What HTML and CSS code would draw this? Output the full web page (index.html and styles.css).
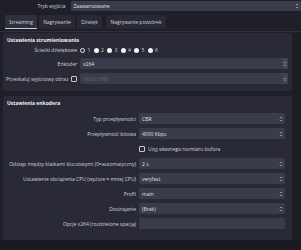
FILE: index.html
```html
<!DOCTYPE html>
<html lang="pl">
<head>
<meta charset="utf-8">
<link rel="stylesheet" href="styles.css">
</head>
<body>
<div class="toprow">
  <div class="toplabel">Tryb wyjścia</div>
  <div class="field topfield"><span>Zaawansowane</span>
    <svg class="ind" viewBox="0 0 4 6" width="4" height="6"><path d="M0.8 2.2 L2 1 L3.2 2.2 M0.8 3.8 L2 5 L3.2 3.8" fill="none" stroke="#b8b9c2" stroke-width="0.7"/></svg>
  </div>
</div>

<div class="tabs">
  <div class="tab active t1">Streaming</div>
  <div class="tab t2">Nagrywanie</div>
  <div class="tab t3">Dźwięk</div>
  <div class="tab t4">Nagrywanie powtórek</div>
</div>
<div class="tabline"></div>

<div class="main">
  <div class="scrollarea">
    <section class="group g1">
      <div class="gtitle">Ustawienia strumieniowania</div>
      <div class="frow radiorow">
        <div class="lbl">Ścieżki dźwiękowe</div>
        <div class="radios">
          <span class="ritem"><i class="radio ring"></i>1</span>
          <span class="ritem"><i class="radio"></i>2</span>
          <span class="ritem"><i class="radio"></i>3</span>
          <span class="ritem"><i class="radio"></i>4</span>
          <span class="ritem"><i class="radio"></i>5</span>
          <span class="ritem"><i class="radio"></i>6</span>
        </div>
      </div>
      <div class="frow">
        <div class="lbl">Enkoder</div>
        <div class="field btnfield"><span>x264</span><span class="btn"><svg viewBox="0 0 4 6" width="4" height="6"><path d="M0.8 2.2 L2 1 L3.2 2.2 M0.8 3.8 L2 5 L3.2 3.8" fill="none" stroke="#b8b9c2" stroke-width="0.7"/></svg></span></div>
      </div>
      <div class="frow">
        <div class="lbl">Przeskaluj wyjściowy obraz <i class="check"></i></div>
        <div class="field btnfield disabled"><span>1920x1080</span><span class="btn"><svg viewBox="0 0 4 6" width="4" height="6"><path d="M0.6 2.4 H3.4 M0.6 3.4 L2 4.8 L3.4 3.4" fill="none" stroke="#9a9ba6" stroke-width="0.7"/></svg></span></div>
      </div>
    </section>

    <section class="group g2">
      <div class="gtitle">Ustawienia enkodera</div>
      <div class="frow">
        <div class="lbl">Typ przepływności</div>
        <div class="field"><span>CBR</span><svg class="ind" viewBox="0 0 4 6" width="4" height="6"><path d="M0.8 2.2 L2 1 L3.2 2.2 M0.8 3.8 L2 5 L3.2 3.8" fill="none" stroke="#b8b9c2" stroke-width="0.7"/></svg></div>
      </div>
      <div class="frow">
        <div class="lbl">Przepływność bitowa</div>
        <div class="field"><span>4000 Kbps</span><svg class="ind" viewBox="0 0 4 6" width="4" height="6"><path d="M0.8 2.2 L2 1 L3.2 2.2 M0.8 3.8 L2 5 L3.2 3.8" fill="none" stroke="#b8b9c2" stroke-width="0.7"/></svg></div>
      </div>
      <div class="frow">
        <div class="lbl"></div>
        <div class="chkline"><i class="check"></i><span>Użyj własnego rozmiaru bufora</span></div>
      </div>
      <div class="frow">
        <div class="lbl">Odstęp między klatkami kluczowymi (0=automatyczny)</div>
        <div class="field"><span>2 s</span><svg class="ind" viewBox="0 0 4 6" width="4" height="6"><path d="M0.8 2.2 L2 1 L3.2 2.2 M0.8 3.8 L2 5 L3.2 3.8" fill="none" stroke="#b8b9c2" stroke-width="0.7"/></svg></div>
      </div>
      <div class="frow">
        <div class="lbl">Ustawienie obciążenia CPU (wyższe = mniej CPU)</div>
        <div class="field"><span>veryfast</span><svg class="ind" viewBox="0 0 4 6" width="4" height="6"><path d="M0.8 2.2 L2 1 L3.2 2.2 M0.8 3.8 L2 5 L3.2 3.8" fill="none" stroke="#b8b9c2" stroke-width="0.7"/></svg></div>
      </div>
      <div class="frow">
        <div class="lbl">Profil</div>
        <div class="field"><span>main</span><svg class="ind" viewBox="0 0 4 6" width="4" height="6"><path d="M0.8 2.2 L2 1 L3.2 2.2 M0.8 3.8 L2 5 L3.2 3.8" fill="none" stroke="#b8b9c2" stroke-width="0.7"/></svg></div>
      </div>
      <div class="frow">
        <div class="lbl">Dostrajanie</div>
        <div class="field"><span>(Brak)</span><svg class="ind" viewBox="0 0 4 6" width="4" height="6"><path d="M0.8 2.2 L2 1 L3.2 2.2 M0.8 3.8 L2 5 L3.2 3.8" fill="none" stroke="#b8b9c2" stroke-width="0.7"/></svg></div>
      </div>
      <div class="frow">
        <div class="lbl">Opcje x264 (rozdzielone spacją)</div>
        <div class="field"><span></span></div>
      </div>
    </section>
  </div>
  <div class="gutter"></div>
</div>
<div class="bottom"></div>
</body>
</html>
```

FILE: styles.css
```css
html, body {
  margin: 0;
  padding: 0;
}
body {
  width: 301px;
  height: 250px;
  overflow: hidden;
  background: #1e1f28;
  font-family: "Open Sans", "DejaVu Sans", sans-serif;
  font-size: 5px;
  line-height: 6px;
  color: #d3d4db;
}

.toprow {
  display: flex;
  align-items: center;
  height: 10px;
  padding-top: 1px;
}
.toplabel {
  width: 68px;
  text-align: right;
  padding-right: 2.5px;
  box-sizing: border-box;
  flex: none;
}
.topfield {
  margin-left: 2.5px;
  width: 225px;
  flex: none;
}

.field {
  height: 11px;
  background: #3a3c4a;
  border-radius: 1.5px;
  display: flex;
  align-items: center;
  justify-content: space-between;
  padding-left: 3px;
  padding-right: 2px;
  box-sizing: border-box;
  color: #dfe0e6;
  flex: 1;
}
.topfield { height: 10px; }
.field .ind { flex: none; }
.field.disabled { color: #666875; }

.btnfield { padding-right: 0; }
.btnfield .btn {
  width: 6px;
  height: 11px;
  background: #41434f;
  border-radius: 0 1.5px 1.5px 0;
  display: flex;
  align-items: center;
  justify-content: center;
}

.tabs {
  display: flex;
  gap: 2px;
  margin: 4px 0 0 5px;
}
.tab {
  height: 14px;
  background: #282934;
  display: flex;
  align-items: center;
  justify-content: center;
  border-radius: 1.5px 1.5px 0 0;
  color: #d0d1d8;
  box-sizing: border-box;
}
.tab.active {
  background: #2f303b;
  box-shadow: inset 0 -1px 0 #c9cad2;
}
.t1 { width: 32px; }
.t2 { width: 36px; }
.t3 { width: 25px; margin-left: 0; }
.t4 { width: 60px; margin-left: 2px; }

.tabline {
  height: 1px;
  background: #2e303b;
  margin-top: 2px;
}

.main {
  display: flex;
  margin-top: 1px;
}
.scrollarea {
  width: 292px;
  flex: none;
}
.gutter {
  flex: 1;
  background: #1c1d25;
}

.group {
  margin-left: 3px;
  background: #292a35;
  border-radius: 2px;
  display: flex;
  flex-direction: column;
  padding-top: 4px;
}
.gtitle {
  font-weight: bold;
  color: #eeeef2;
  padding-left: 4px;
  height: 6px;
}

.g1 {
  padding-right: 4px;
  padding-bottom: 7px;
  gap: 4px;
}
.g1 .lbl { width: 74px; }
.g1 .radiorow { margin-top: -1px; height: 8px; margin-bottom: 0; }

.g2 {
  margin-top: 5px;
  padding-right: 7px;
  padding-bottom: 11px;
  gap: 4px;
}
.g2 .gtitle { margin-bottom: 3px; }
.g2 .lbl { width: 133px; }

.frow {
  display: flex;
  align-items: center;
  gap: 3px;
}
.lbl {
  flex: none;
  text-align: right;
  white-space: nowrap;
  display: flex;
  align-items: center;
  justify-content: flex-end;
  gap: 2.5px;
}

.radios {
  display: flex;
  align-items: center;
}
.ritem {
  display: flex;
  align-items: center;
  gap: 2.5px;
  width: 13.5px;
  color: #d3d4db;
}
.radio {
  display: block;
  width: 5px;
  height: 5px;
  border-radius: 50%;
  background: #f2f2f5;
  box-sizing: border-box;
}
.radio.ring {
  background: #292a35;
  border: 1px solid #e8e8ee;
}

.check {
  display: block;
  width: 6px;
  height: 6px;
  border: 0.8px solid #c9cad2;
  border-radius: 1px;
  box-sizing: border-box;
  flex: none;
}
.chkline {
  display: flex;
  align-items: center;
  gap: 3px;
  height: 11px;
}

.bottom {
  height: 12px;
  background: #1a1b22;
}
```
